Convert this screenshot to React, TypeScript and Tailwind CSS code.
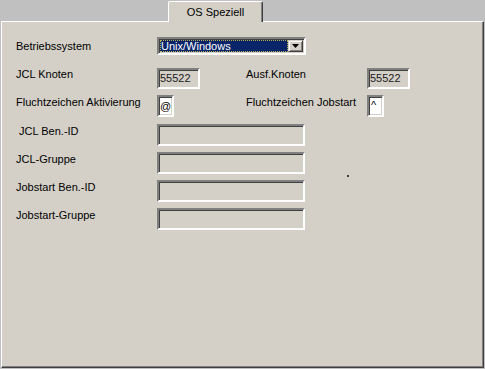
import React from "react";

const field =
  "box-border border-2 border-t-[#808080] border-l-[#808080] border-b-white border-r-white shadow-[inset_1px_1px_0_#404040,inset_-1px_-1px_0_#d4d0c8]";

function Label({ children, w, mt = 0 }: { children: React.ReactNode; w: string; mt?: number }) {
  return (
    <div className={`${w} shrink-0 leading-[13px] whitespace-pre`} style={mt ? { marginTop: mt } : undefined}>
      {children}
    </div>
  );
}

export default function App() {
  return (
    <div
      className="relative w-[485px] h-[369px] bg-[#c0c0c0] text-black text-[11px] overflow-hidden"
      style={{ fontFamily: '"Liberation Sans", Arial, sans-serif' }}
    >
      {/* tab strip */}
      <div className="h-[21px] pt-[1px] pl-[168px] flex">
        <div className="relative z-10 box-border w-[95px] h-[21px] bg-[#d4d0c8] border-l border-t border-r border-l-white border-t-white border-r-[#404040] rounded-tl-[2px] rounded-tr-[2px] shadow-[inset_-1px_0_0_#808080] flex justify-center pt-[4px] leading-[13px]">
          OS Speziell
        </div>
      </div>

      {/* panel */}
      <div className="ml-[1px] w-[483px] h-[347px] box-border bg-[#d4d0c8] border border-t-white border-l-white border-r-[#404040] border-b-[#404040] shadow-[inset_-1px_-1px_0_#808080] pl-[14px] pt-[15px] flex flex-col">
        {/* Row 1 */}
        <div className="flex items-start h-[18px]">
          <Label w="w-[141px]" mt={3}>Betriebssystem</Label>
          <div className={`${field} w-[149px] h-[18px] bg-white flex items-stretch p-[1px]`}>
            <div className="flex-1 bg-[#0a246a] text-white leading-[12px] pl-[1px] outline outline-1 outline-dotted outline-[#b8b050] -outline-offset-1 my-[0px]">
              Unix/Windows
            </div>
            <div className="w-[15px] bg-[#d4d0c8] border border-t-[#d4d0c8] border-l-[#d4d0c8] border-b-[#404040] border-r-[#404040] shadow-[inset_1px_1px_0_#fff,inset_-1px_-1px_0_#808080] flex items-center justify-center">
              <svg width="7" height="4" viewBox="0 0 7 4">
                <path d="M0 0h7L3.5 4z" fill="#000" />
              </svg>
            </div>
          </div>
        </div>

        {/* Row 2 */}
        <div className="flex items-start h-[21px] mt-[13px]">
          <Label w="w-[141px]">JCL Knoten</Label>
          <div className="w-[89px] shrink-0">
            <div className={`${field} w-[43px] h-[21px] pl-[1px] pt-[2px] leading-[13px] text-[#202020]`}>55522</div>
          </div>
          <Label w="w-[121px]">Ausf.Knoten</Label>
          <div className={`${field} w-[43px] h-[21px] pl-[1px] pt-[2px] leading-[13px] text-[#202020]`}>55522</div>
        </div>

        {/* Row 3 */}
        <div className="flex items-start h-[22px] mt-[6px]">
          <Label w="w-[141px]" mt={1}>Fluchtzeichen Aktivierung</Label>
          <div className="w-[89px] shrink-0">
            <div className={`${field} w-[17px] h-[22px] bg-white pl-[1px] pt-[3px] leading-[13px]`}>@</div>
          </div>
          <Label w="w-[121px]" mt={1}>Fluchtzeichen Jobstart</Label>
          <div className={`${field} w-[17px] h-[22px] bg-white pl-[2px] pt-[2px] leading-[13px]`}>^</div>
        </div>

        {/* Rows 4-7 */}
        {[" JCL Ben.-ID", "JCL-Gruppe", "Jobstart Ben.-ID", "Jobstart-Gruppe"].map((t, i) => (
          <div key={t} className={`flex items-start h-[22px] ${i === 0 ? "mt-[7px]" : "mt-[6px]"}`}>
            <Label w="w-[141px]" mt={1}>{t}</Label>
            <div className={`${field} w-[148px] h-[22px]`} />
          </div>
        ))}
      </div>

      {/* stray pixel */}
      <span className="absolute left-[347px] top-[175px] w-[2px] h-[2px] bg-[#404040]" />
    </div>
  );
}
